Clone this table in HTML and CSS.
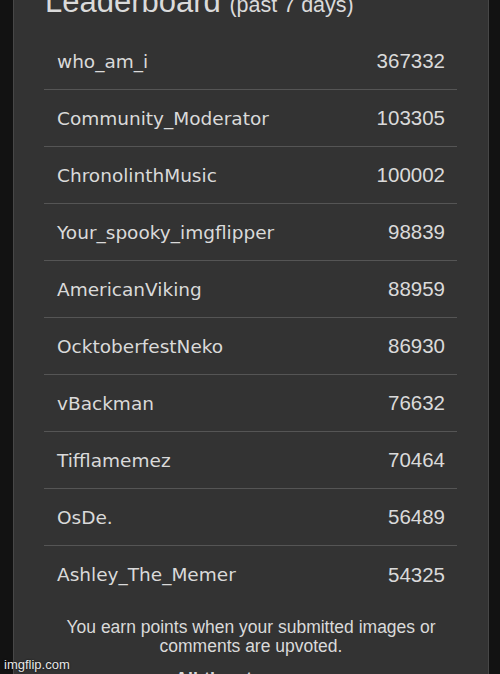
FILE: index.html
```html
<!DOCTYPE html>
<html lang="en">
<head>
  <meta charset="UTF-8" />
  <meta name="viewport" content="width=device-width, initial-scale=1.0"/>
  <title>Leaderboard</title>
  <link rel="stylesheet" href="styles.css">
</head>
<body>

  <div class="panel">
    <h1>Leaderboard <span class="period">(past 7 days)</span></h1>

    <div class="board">
      <div class="row"><span class="user">who_am_i</span><span class="points">367332</span></div>
      <div class="row"><span class="user">Community_Moderator</span><span class="points">103305</span></div>
      <div class="row"><span class="user">ChronolinthMusic</span><span class="points">100002</span></div>
      <div class="row"><span class="user">Your_spooky_imgflipper</span><span class="points">98839</span></div>
      <div class="row"><span class="user">AmericanViking</span><span class="points">88959</span></div>
      <div class="row"><span class="user">OcktoberfestNeko</span><span class="points">86930</span></div>
      <div class="row"><span class="user">vBackman</span><span class="points">76632</span></div>
      <div class="row"><span class="user">Tifflamemez</span><span class="points">70464</span></div>
      <div class="row"><span class="user">OsDe.</span><span class="points">56489</span></div>
      <div class="row"><span class="user">Ashley_The_Memer</span><span class="points">54325</span></div>
    </div>

    <p class="note">You earn points when your submitted images or comments are upvoted.</p>

    <h2>All-time top users</h2>
  </div>

  <!-- watermark -->
  <div class="watermark">imgflip.com</div>

</body>
</html>
```

FILE: styles.css
```css
body {
  margin: 0;
  background-color: #121212;
  font-family: "Liberation Sans", Arial, sans-serif;
  color: #dadada;
  overflow: hidden;
}

.panel {
  margin: -14px 0 0 13px;
  width: 474px;
  min-height: 720px;
  background-color: #333;
  border-left: 1px solid #474747;
  border-right: 1px solid #474747;
}

h1 {
  margin: 0 0 12px;
  padding-left: 31px;
  font-size: 31px;
  line-height: 32px;
  font-weight: normal;
  color: #dadada;
}

h1 .period {
  font-size: 21.5px;
}

.board {
  margin: 0 31px 0 30px;
}

.row {
  display: flex;
  justify-content: space-between;
  align-items: center;
  height: 56px;
  padding: 0 12px 0 13px;
  border-bottom: 1px solid #555;
}

.row:last-child {
  border-bottom: none;
  height: 57px;
}

.user {
  font-family: "DejaVu Sans", Verdana, sans-serif;
  font-size: 18.5px;
}

.points {
  font-size: 20.5px;
}

.note {
  margin: 15px 30px 0;
  font-size: 17.5px;
  line-height: 19px;
  text-align: center;
}

h2 {
  margin: 13px 0 0;
  font-size: 18px;
  font-weight: bold;
  text-align: center;
  color: #dadada;
}

.watermark {
  position: absolute;
  left: 4px;
  bottom: 2px;
  font-size: 13px;
  color: #e8e8e8;
  text-shadow: 0 0 2px #000;
}
```
